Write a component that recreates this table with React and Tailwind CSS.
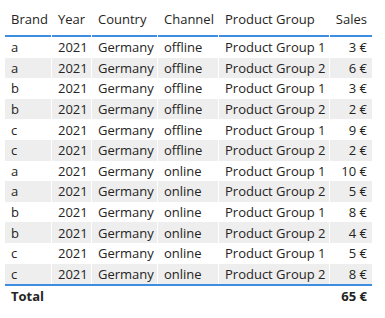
const COLUMNS = [
  { key: 'brand', label: 'Brand', width: 'w-[46px]' },
  { key: 'year', label: 'Year', width: 'w-[39px]' },
  { key: 'country', label: 'Country', width: 'w-[65px]' },
  { key: 'channel', label: 'Channel', width: 'w-[60px]' },
  { key: 'group', label: 'Product Group', width: 'w-[110px]' },
  { key: 'sales', label: 'Sales', width: 'w-[42px]', right: true },
]

const ROWS = [
  ['a', '2021', 'Germany', 'offline', 'Product Group 1', '3 €'],
  ['a', '2021', 'Germany', 'offline', 'Product Group 2', '6 €'],
  ['b', '2021', 'Germany', 'offline', 'Product Group 1', '3 €'],
  ['b', '2021', 'Germany', 'offline', 'Product Group 2', '2 €'],
  ['c', '2021', 'Germany', 'offline', 'Product Group 1', '9 €'],
  ['c', '2021', 'Germany', 'offline', 'Product Group 2', '2 €'],
  ['a', '2021', 'Germany', 'online', 'Product Group 1', '10 €'],
  ['a', '2021', 'Germany', 'online', 'Product Group 2', '5 €'],
  ['b', '2021', 'Germany', 'online', 'Product Group 1', '8 €'],
  ['b', '2021', 'Germany', 'online', 'Product Group 2', '4 €'],
  ['c', '2021', 'Germany', 'online', 'Product Group 1', '5 €'],
  ['c', '2021', 'Germany', 'online', 'Product Group 2', '8 €'],
]

export default function App() {
  return (
    <div className="w-[385px] h-[318px] bg-white pl-[5px] text-[#252423] text-[13px] font-['Open_Sans',sans-serif]">
      {/* Header */}
      <div className="flex gap-x-px h-[37px]">
        {COLUMNS.map(c => (
          <div
            key={c.key}
            className={`${c.width} shrink-0 flex items-end pb-[6px] px-[6px] border-b-2 border-[#3d8de0] ${c.right ? 'justify-end pr-[5px]' : ''}`}
          >
            <span className="whitespace-nowrap leading-5">{c.label}</span>
          </div>
        ))}
      </div>

      {/* Body */}
      {ROWS.map((row, i) => (
        <div key={i} className="flex gap-x-px h-[20.6px]">
          {row.map((val, j) => (
            <div
              key={j}
              className={`${COLUMNS[j].width} shrink-0 flex items-center px-[6px] ${i % 2 ? 'bg-[#eeeeee]' : 'bg-white'} ${COLUMNS[j].right ? 'justify-end pr-[5px]' : ''}`}
            >
              <span className="whitespace-nowrap leading-5">{val}</span>
            </div>
          ))}
        </div>
      ))}

      {/* Total */}
      <div className="flex w-[367px] h-[21px] border-t-2 border-[#3d8de0] font-bold items-center">
        <span className="px-[6px] leading-5">Total</span>
        <span className="ml-auto pr-[5px] leading-5">65 €</span>
      </div>
    </div>
  )
}
